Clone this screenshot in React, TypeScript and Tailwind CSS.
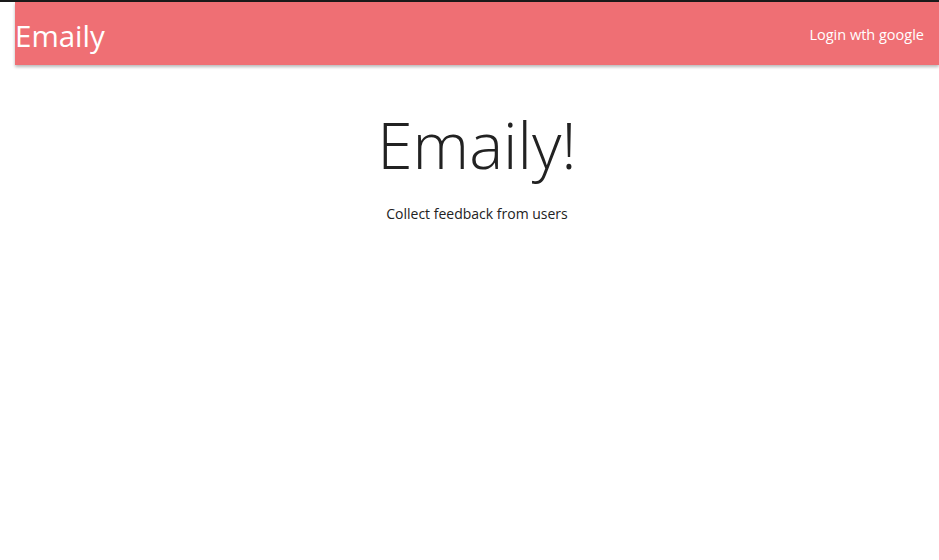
export default function App() {
  return (
    <div className="min-h-[560px] bg-white border-t-2 border-[#1a1a1a]" style={{ fontFamily: '"Open Sans", "Noto Sans", sans-serif' }}>
      <div className="pl-[15px]">
        <nav className="h-[63px] bg-[#ef6f74] flex items-center justify-between shadow-[0_2px_3px_rgba(0,0,0,0.28)]">
          <a className="text-white text-[29.5px] leading-none mt-[4px]">Emaily</a>
          <a className="text-white text-[14.5px] pr-[15px] mt-[2px]">Login wth google</a>
        </nav>
        <div className="text-center">
          <h1 className="text-[64px] font-light text-[#222] leading-[1.1] mt-[45px]">Emaily!</h1>
          <p className="text-[14px] text-[#222] mt-[23px]">Collect feedback from users</p>
        </div>
      </div>
    </div>
  );
}
